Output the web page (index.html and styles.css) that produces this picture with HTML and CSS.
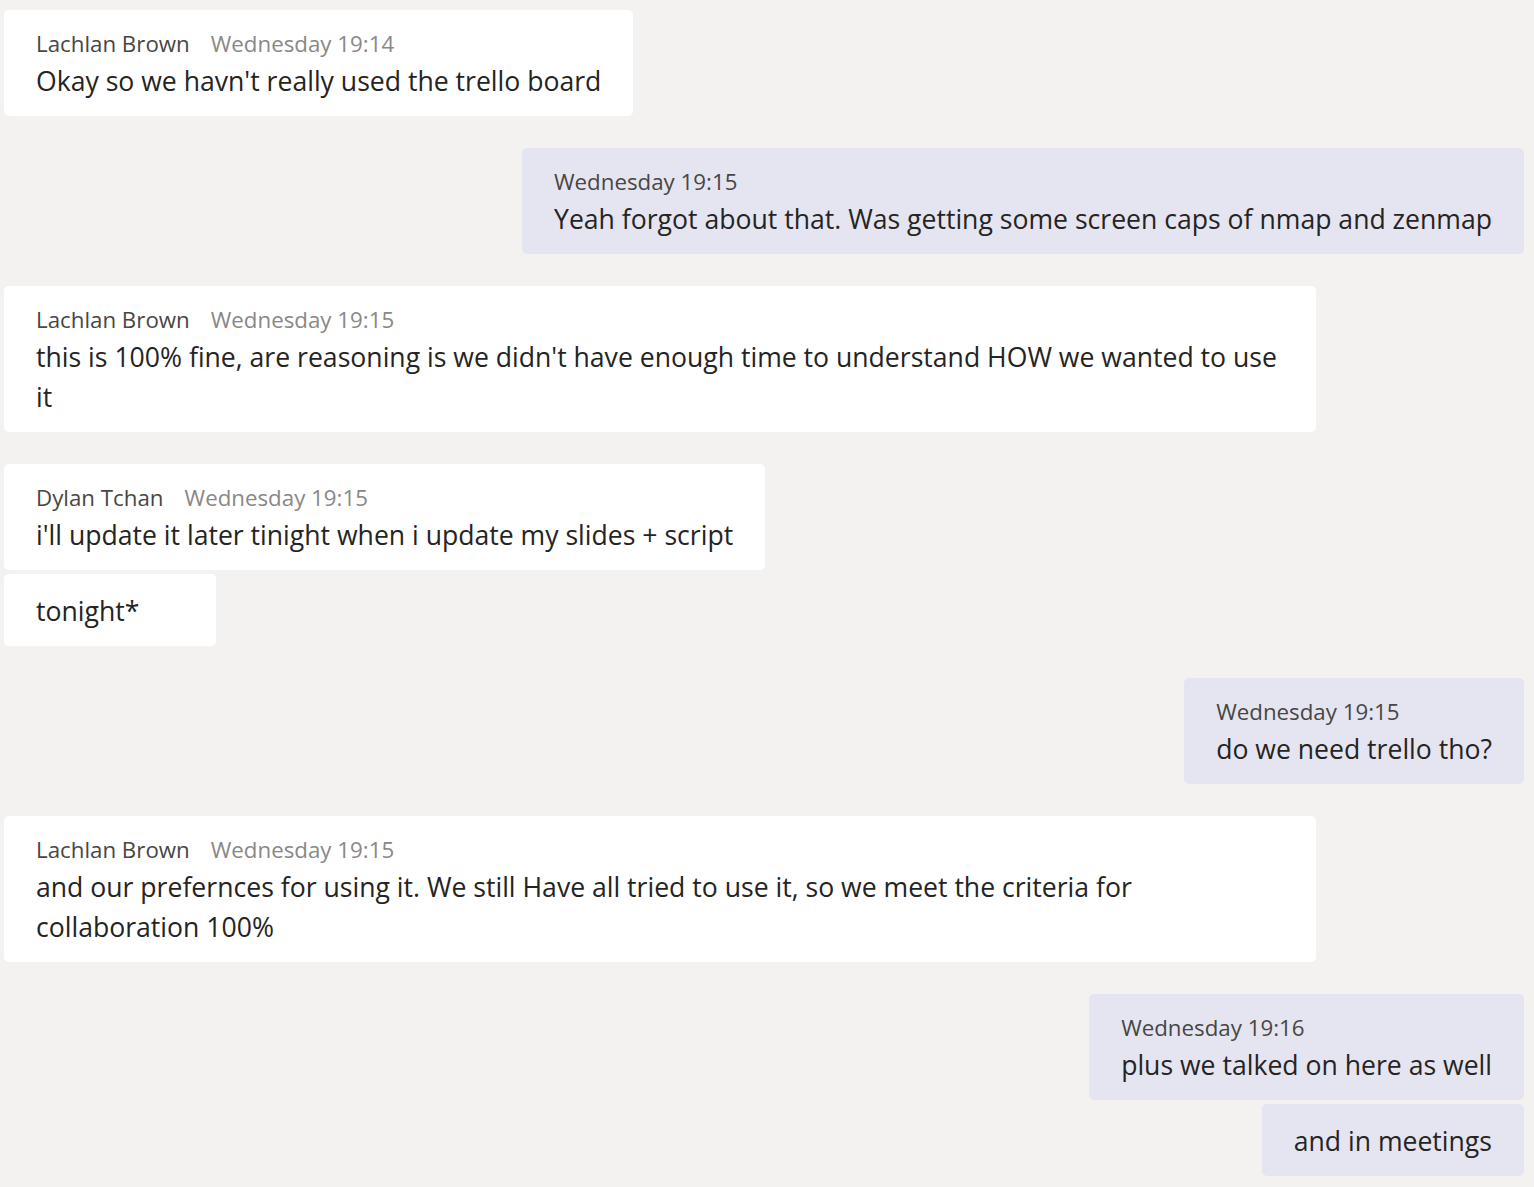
FILE: index.html
```html
<!DOCTYPE html>
<html>
<head>
<meta charset="utf-8">
<link rel="stylesheet" href="styles.css">
</head>
<body>
<div class="chat">
  <div class="group other">
    <div class="bubble">
      <div class="meta"><span class="author">Lachlan Brown</span><span class="time">Wednesday 19:14</span></div>
      <div class="text">Okay so we havn't really used the trello board</div>
    </div>
  </div>
  <div class="group me">
    <div class="bubble">
      <div class="meta"><span class="time">Wednesday 19:15</span></div>
      <div class="text">Yeah forgot about that. Was getting some screen caps of nmap and zenmap</div>
    </div>
  </div>
  <div class="group other">
    <div class="bubble">
      <div class="meta"><span class="author">Lachlan Brown</span><span class="time">Wednesday 19:15</span></div>
      <div class="text">this is 100% fine, are reasoning is we didn't have enough time to understand HOW we wanted to use it</div>
    </div>
  </div>
  <div class="group other">
    <div class="bubble">
      <div class="meta"><span class="author">Dylan Tchan</span><span class="time">Wednesday 19:15</span></div>
      <div class="text">i'll update it later tinight when i update my slides + script</div>
    </div>
    <div class="bubble">
      <div class="text">tonight*</div>
    </div>
  </div>
  <div class="group me">
    <div class="bubble">
      <div class="meta"><span class="time">Wednesday 19:15</span></div>
      <div class="text">do we need trello tho?</div>
    </div>
  </div>
  <div class="group other">
    <div class="bubble">
      <div class="meta"><span class="author">Lachlan Brown</span><span class="time">Wednesday 19:15</span></div>
      <div class="text">and our prefernces for using it. We still Have all tried to use it, so we meet the criteria for collaboration 100%</div>
    </div>
  </div>
  <div class="group me">
    <div class="bubble">
      <div class="meta"><span class="time">Wednesday 19:16</span></div>
      <div class="text">plus we talked on here as well</div>
    </div>
    <div class="bubble">
      <div class="text">and in meetings</div>
    </div>
  </div>
</div>
</body>
</html>
```
FILE: styles.css
```css
html, body {
  margin: 0;
  padding: 0;
  background: #f3f2f1;
}
body {
  font-family: "Open Sans", "Noto Sans", sans-serif;
  color: #252423;
}
.chat {
  display: flex;
  flex-direction: column;
  gap: 32px;
  padding: 10px 10px 0 4px;
}
.group {
  display: flex;
  flex-direction: column;
  gap: 4px;
}
.group.other {
  align-items: flex-start;
}
.group.me {
  align-items: flex-end;
}
.bubble {
  min-width: 148px;
  max-width: 1248px;
  padding: 17px 32px 15px;
  border-radius: 5px;
  background: #ffffff;
}
.me .bubble {
  background: #e5e5f1;
}
.meta {
  font-size: 22.3px;
  line-height: 34px;
  white-space: nowrap;
}
.author {
  color: #484644;
  margin-right: 21px;
}
.time {
  color: #8a8886;
}
.me .time {
  color: #484644;
}
.text {
  font-size: 26.6px;
  line-height: 40px;
}
```
